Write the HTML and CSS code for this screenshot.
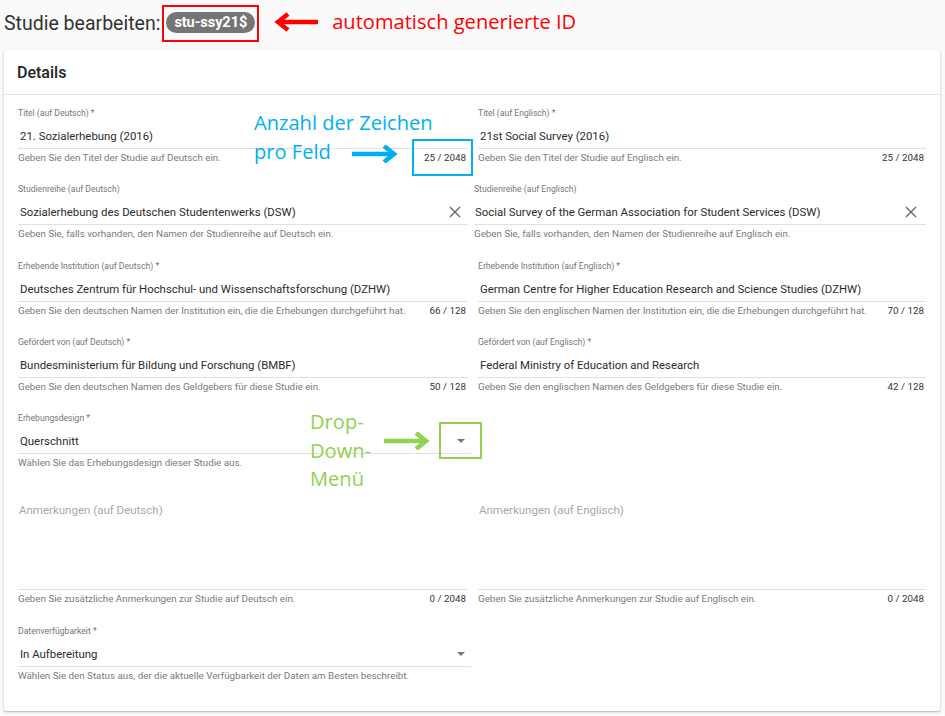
FILE: index.html
```html
<!DOCTYPE html>
<html lang="de">
<head>
<meta charset="utf-8">
<title>Studie bearbeiten</title>
<link rel="stylesheet" href="styles.css">
</head>
<body>
<div class="topbar">
  <h1 class="page-title">Studie bearbeiten:</h1>
  <div class="id-frame"><span class="id-badge">stu-ssy21$</span></div>
  <svg class="red-arrow" width="46" height="20" viewBox="0 0 46 20"><path d="M44 10H6" stroke="#f00" stroke-width="4.5" fill="none"/><path d="M14 2L4 10l10 8" stroke="#f00" stroke-width="4.5" fill="none" stroke-linejoin="miter"/></svg>
  <span class="note note-red">automatisch generierte ID</span>
</div>

<div class="card">
  <div class="card-head">Details</div>
  <div class="card-body">
    <div class="grid">
      <div class="field">
        <div class="label">Titel (auf Deutsch) *</div>
        <div class="input"><span class="value">21. Sozialerhebung (2016)</span></div>
        <div class="hint"><span>Geben Sie den Titel der Studie auf Deutsch ein.</span><span class="count">25 / 2048</span></div>
      </div>
      <div class="field">
        <div class="label">Titel (auf Englisch) *</div>
        <div class="input"><span class="value">21st Social Survey (2016)</span></div>
        <div class="hint"><span>Geben Sie den Titel der Studie auf Englisch ein.</span><span class="count">25 / 2048</span></div>
      </div>

      <div class="field">
        <div class="label">Studienreihe (auf Deutsch)</div>
        <div class="input"><span class="value">Sozialerhebung des Deutschen Studentenwerks (DSW)</span>
          <svg class="clear" width="12" height="12" viewBox="0 0 12 12"><path d="M1 1l10 10M11 1L1 11" stroke="#666" stroke-width="1.4"/></svg></div>
        <div class="hint"><span>Geben Sie, falls vorhanden, den Namen der Studienreihe auf Deutsch ein.</span></div>
      </div>
      <div class="field shifted">
        <div class="label">Studienreihe (auf Englisch)</div>
        <div class="input"><span class="value">Social Survey of the German Association for Student Services (DSW)</span>
          <svg class="clear" width="12" height="12" viewBox="0 0 12 12"><path d="M1 1l10 10M11 1L1 11" stroke="#666" stroke-width="1.4"/></svg></div>
        <div class="hint"><span>Geben Sie, falls vorhanden, den Namen der Studienreihe auf Englisch ein.</span></div>
      </div>

      <div class="field">
        <div class="label">Erhebende Institution (auf Deutsch) *</div>
        <div class="input"><span class="value">Deutsches Zentrum für Hochschul- und Wissenschaftsforschung (DZHW)</span></div>
        <div class="hint"><span>Geben Sie den deutschen Namen der Institution ein, die die Erhebungen durchgeführt hat.</span><span class="count">66 / 128</span></div>
      </div>
      <div class="field">
        <div class="label">Erhebende Institution (auf Englisch) *</div>
        <div class="input"><span class="value">German Centre for Higher Education Research and Science Studies (DZHW)</span></div>
        <div class="hint"><span>Geben Sie den englischen Namen der Institution ein, die die Erhebungen durchgeführt hat.</span><span class="count">70 / 128</span></div>
      </div>

      <div class="field">
        <div class="label">Gefördert von (auf Deutsch) *</div>
        <div class="input"><span class="value">Bundesministerium für Bildung und Forschung (BMBF)</span></div>
        <div class="hint"><span>Geben Sie den deutschen Namen des Geldgebers für diese Studie ein.</span><span class="count">50 / 128</span></div>
      </div>
      <div class="field">
        <div class="label">Gefördert von (auf Englisch) *</div>
        <div class="input"><span class="value">Federal Ministry of Education and Research</span></div>
        <div class="hint"><span>Geben Sie den englischen Namen des Geldgebers für diese Studie ein.</span><span class="count">42 / 128</span></div>
      </div>

      <div class="field">
        <div class="label">Erhebungsdesign *</div>
        <div class="input select"><span class="value">Querschnitt</span><span class="caret"></span></div>
        <div class="hint"><span>Wählen Sie das Erhebungsdesign dieser Studie aus.</span></div>
      </div>
      <div class="field"></div>

      <div class="field tall">
        <div class="area"><span class="placeholder">Anmerkungen (auf Deutsch)</span></div>
        <div class="hint"><span>Geben Sie zusätzliche Anmerkungen zur Studie auf Deutsch ein.</span><span class="count">0 / 2048</span></div>
      </div>
      <div class="field tall">
        <div class="area"><span class="placeholder">Anmerkungen (auf Englisch)</span></div>
        <div class="hint"><span>Geben Sie zusätzliche Anmerkungen zur Studie auf Englisch ein.</span><span class="count">0 / 2048</span></div>
      </div>

      <div class="field">
        <div class="label">Datenverfügbarkeit *</div>
        <div class="input select"><span class="value">In Aufbereitung</span><span class="caret"></span></div>
        <div class="hint"><span>Wählen Sie den Status aus, der die aktuelle Verfügbarkeit der Daten am Besten beschreibt.</span></div>
      </div>
    </div>
  </div>

  <div class="note note-blue anno-count">Anzahl der Zeichen<br>pro Feld</div>
  <svg class="anno-arrow-blue" width="48" height="18" viewBox="0 0 48 18"><path d="M2 9H42" stroke="#00b0f0" stroke-width="4.5" fill="none"/><path d="M34 1l10 8-10 8" stroke="#00b0f0" stroke-width="4.5" fill="none"/></svg>
  <div class="anno-box-blue"></div>

  <div class="note note-green anno-drop">Drop-<br>Down-<br>Menü</div>
  <svg class="anno-arrow-green" width="48" height="18" viewBox="0 0 48 18"><path d="M2 9H42" stroke="#92d050" stroke-width="4.5" fill="none"/><path d="M34 1l10 8-10 8" stroke="#92d050" stroke-width="4.5" fill="none"/></svg>
  <div class="anno-box-green"></div>
</div>
</body>
</html>
```

FILE: styles.css
```css
* { box-sizing: border-box; }
html, body { margin: 0; padding: 0; }
body {
  background: #fafafa;
  font-family: Roboto, "Liberation Sans", sans-serif;
  color: #212121;
  width: 945px;
  height: 716px;
  overflow: hidden;
}

.topbar {
  display: flex;
  align-items: center;
  padding: 5px 0 0 4px;
  height: 42px;
}
.page-title {
  margin: 0 2px 0 0;
  font-size: 19.5px;
  font-weight: 400;
  color: #333;
  line-height: 24px;
}
.id-frame {
  border: 2px solid #f00;
  padding: 5px 2px 7px;
  display: flex;
}
.id-badge {
  display: inline-block;
  background: #757575;
  color: #fff;
  font-weight: 700;
  font-size: 14.6px;
  line-height: 21px;
  height: 21px;
  padding: 0 8px 0 8px;
  border-radius: 11px;
  letter-spacing: -0.1px;
}
.red-arrow { margin-left: 15px; margin-top: -4px; }

.note {
  font-family: "Open Sans", "Liberation Sans", sans-serif;
  font-size: 20.1px;
  font-weight: 400;
}
.note-red { color: #f00; margin-left: 12px; margin-top: -4px; }
.note-blue { color: #00b0f0; }
.note-green { color: #92d050; }

.card {
  position: relative;
  margin: 8px 5px 0 4px;
  width: 936px;
  height: 661px;
  background: #fff;
  border-radius: 2px;
  box-shadow: 0 1px 3px rgba(0,0,0,0.22), 0 1px 1px rgba(0,0,0,0.1);
}
.card-head {
  height: 45px;
  padding: 13px 13px 0;
  font-size: 16px;
  font-weight: 500;
  color: #222;
  line-height: 20px;
  border-bottom: 1px solid #e3e3e3;
}
.card-body {
  padding: 13px 14px 0 14px;
}
.grid {
  display: grid;
  grid-template-columns: 1fr 1fr;
  column-gap: 8px;
}
.field { margin-bottom: 20.3px; height: 56px; }
.field:nth-child(even) { padding-left: 2px; }
.field.shifted { padding-left: 0; margin-left: -2px; }
.label {
  font-size: 8.6px;
  line-height: 10px;
  height: 10px;
  color: #757575;
}
.input {
  display: flex;
  align-items: center;
  height: 31px;
  padding: 10px 0 4px 2px;
  border-bottom: 1px solid #e0e0e0;
}
.shifted .input { padding-left: 1px; }
.select { margin-right: -3px; }
.value {
  flex: 1;
  font-size: 11.4px;
  line-height: 16px;
  color: #2b2b2b;
  white-space: nowrap;
}
.clear { margin-right: 7px; flex: none; }
.shifted .clear { margin-right: 9px; }
.caret {
  width: 0; height: 0;
  border-left: 4px solid transparent;
  border-right: 4px solid transparent;
  border-top: 4px solid #777;
  margin-right: 6px;
}
.hint {
  display: flex;
  justify-content: space-between;
  margin-top: 3px;
  font-size: 9.8px;
  line-height: 12px;
  color: #7a7a7a;
  white-space: nowrap;
}
.count { color: #333; padding-right: 2px; }

.field.tall { height: 116px; }
.area {
  height: 101px;
  padding: 10px 0 0 1px;
  border-bottom: 1px solid #e0e0e0;
}
.placeholder {
  font-size: 11.5px;
  line-height: 16px;
  color: #a8a8a8;
}

.anno-count {
  position: absolute;
  left: 250px;
  top: 58px;
  line-height: 29px;
}
.anno-arrow-blue { position: absolute; left: 346px; top: 95px; }
.anno-box-blue {
  position: absolute;
  left: 408px; top: 89px;
  width: 61px; height: 37px;
  border: 2px solid #00b0f0;
}
.anno-drop {
  position: absolute;
  left: 306px;
  top: 358px;
  line-height: 28.5px;
}
.anno-arrow-green { position: absolute; left: 378px; top: 382px; }
.anno-box-green {
  position: absolute;
  left: 435px; top: 372px;
  width: 43px; height: 37px;
  border: 2px solid #92d050;
}
```
